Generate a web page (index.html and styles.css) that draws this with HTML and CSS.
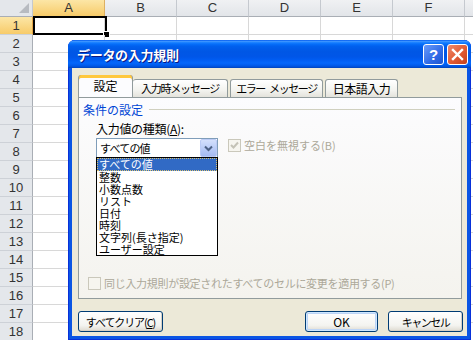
FILE: index.html
```html
<!DOCTYPE html>
<html lang="ja">
<head>
<meta charset="utf-8">
<title>データの入力規則</title>
<link rel="stylesheet" href="styles.css">
</head>
<body>
<div class="sheet">
  <div class="hdr">
    <div class="corner"><span class="tri"></span></div>
    <div class="col sel">A</div>
    <div class="col">B</div>
    <div class="col">C</div>
    <div class="col">D</div>
    <div class="col">E</div>
    <div class="col">F</div>
    <div class="col last"></div>
  </div>
  <div class="row"><div class="rh sel">1</div><div class="cells"><div class="active"><span class="handle"></span></div></div></div>
  <div class="row"><div class="rh">2</div><div class="cells"></div></div>
  <div class="row"><div class="rh">3</div><div class="cells"></div></div>
  <div class="row"><div class="rh">4</div><div class="cells"></div></div>
  <div class="row"><div class="rh">5</div><div class="cells"></div></div>
  <div class="row"><div class="rh">6</div><div class="cells"></div></div>
  <div class="row"><div class="rh">7</div><div class="cells"></div></div>
  <div class="row"><div class="rh">8</div><div class="cells"></div></div>
  <div class="row"><div class="rh">9</div><div class="cells"></div></div>
  <div class="row"><div class="rh">10</div><div class="cells"></div></div>
  <div class="row"><div class="rh">11</div><div class="cells"></div></div>
  <div class="row"><div class="rh">12</div><div class="cells"></div></div>
  <div class="row"><div class="rh">13</div><div class="cells"></div></div>
  <div class="row"><div class="rh">14</div><div class="cells"></div></div>
  <div class="row"><div class="rh">15</div><div class="cells"></div></div>
  <div class="row"><div class="rh">16</div><div class="cells"></div></div>
  <div class="row"><div class="rh">17</div><div class="cells"></div></div>
  <div class="row"><div class="rh">18</div><div class="cells"></div></div>
</div>

<div class="dialog">
  <div class="titlebar">
    <span class="title">データの入力規則</span>
    <span class="tbtn help">?</span>
    <span class="tbtn close"><svg width="13" height="13" viewBox="0 0 13 13"><path d="M2 2 L11 11 M11 2 L2 11" stroke="#fff" stroke-width="2.4" stroke-linecap="square"/></svg></span>
  </div>
  <div class="dbody">
    <div class="tabs">
      <div class="tab active">設定</div>
      <div class="tab t2">入力時メッセージ</div>
      <div class="tab t3">エラー メッセージ</div>
      <div class="tab t4">日本語入力</div>
    </div>
    <div class="panel">
      <div class="legend"><span>条件の設定</span></div>
      <div class="lbl">入力値の種類(<u>A</u>):</div>
      <div class="crow">
        <div class="combo">
          <span class="ctext">すべての値</span>
          <span class="cbtn"><svg width="9" height="7" viewBox="0 0 9 7"><path d="M1 1.5 L4.5 5 L8 1.5" fill="none" stroke="#4D6185" stroke-width="2"/></svg></span>
        </div>
        <div class="chk dis ignore"><span class="box"><svg width="11" height="11" viewBox="0 0 11 11"><path d="M2 5 L4.5 7.5 L9 2.5" fill="none" stroke="#C4C2B6" stroke-width="2"/></svg></span><span>空白を無視する(B)</span></div>
      </div>
      <div class="chk dis apply"><span class="box"></span><span>同じ入力規則が設定されたすべてのセルに変更を適用する(P)</span></div>
      <ul class="list">
        <li class="on">すべての値</li>
        <li>整数</li>
        <li>小数点数</li>
        <li>リスト</li>
        <li>日付</li>
        <li>時刻</li>
        <li>文字列(長さ指定)</li>
        <li>ユーザー設定</li>
      </ul>
    </div>
    <div class="footer">
      <button class="btn clear">すべてクリア(<u>C</u>)</button>
      <span class="spacer"></span>
      <button class="btn ok">OK</button>
      <button class="btn cancel">キャンセル</button>
    </div>
  </div>
</div>
</body>
</html>
```

FILE: styles.css
```css
* { box-sizing: border-box; margin: 0; padding: 0; }
body {
  margin: 0;
  width: 473px;
  height: 340px;
  overflow: hidden;
  background: #fff;
  position: relative;
  font-family: "Liberation Sans", Arial, sans-serif;
}

/* spreadsheet */
.sheet { display: flex; flex-direction: column; }
.hdr { display: flex; height: 17px; }
.corner {
  width: 33px; flex: none; position: relative;
  background: #E4E7EB;
  border-right: 1px solid #C5C9CF;
  border-bottom: 1px solid #A9AEB5;
}
.corner .tri {
  position: absolute; right: 3px; bottom: 3px;
  width: 0; height: 0;
  border-left: 10px solid transparent;
  border-bottom: 10px solid #B7BBC1;
}
.col {
  width: 72px; flex: none;
  background: linear-gradient(#F0F1F3, #E2E5E9);
  border-right: 1px solid #C5C9CF;
  border-bottom: 1px solid #A9AEB5;
  font-size: 13px; line-height: 16px; color: #333;
  text-align: center;
}
.col.sel {
  background: linear-gradient(#FCE6A6, #F7CB69);
  border-bottom-color: #E3A447;
  border-right-color: #DDB062;
}
.col.last { width: 8px; border-right: 0; }
.row { display: flex; height: 18px; }
.rh {
  width: 33px; flex: none;
  background: #E4E7EB;
  border-right: 1px solid #A9AEB5;
  border-bottom: 1px solid #CDD1D7;
  font-size: 13px; line-height: 17px; color: #333;
  text-align: center;
}
.rh.sel {
  background: linear-gradient(#FCE6A6, #F7CB69);
  border-right-color: #E3A447;
}
.cells {
  flex: 1; position: relative;
  border-bottom: 1px solid #D8D8D8;
  background: repeating-linear-gradient(to right, transparent 0 71px, #D8D8D8 71px 72px);
}
.active {
  position: absolute; left: 0; top: -1px;
  width: 74px; height: 19px;
  border: 2px solid #000;
}
.handle {
  position: absolute; right: -5px; bottom: -5px;
  width: 7px; height: 7px;
  background: #000; border: 1px solid #fff;
}

/* dialog */
.dialog {
  position: absolute; left: 68px; top: 40px;
  width: 403px; height: 300px;
  display: flex; flex-direction: column;
  background: #0A55E4;
  border-radius: 7px 7px 0 0;
  padding: 0 4px 4px;
  box-shadow: inset 1px 0 0 #0831D9, inset -1px 0 0 #0831D9, inset 0 -1px 0 #0831D9;
  font-family: "Noto Sans CJK JP", "Noto Sans CJK SC", sans-serif;
  font-size: 12px; color: #000;
}
.titlebar {
  height: 28px; flex: none;
  margin: 0 -4px;
  padding: 0 3px 0 9px;
  display: flex; align-items: center; gap: 2px;
  border-radius: 7px 7px 0 0;
  background: linear-gradient(#0058EE 0%, #3D95FF 5%, #1C82FF 9%, #0670FB 14%, #0060EE 22%, #0057E5 40%, #0056E8 60%, #005DF3 72%, #0467FB 82%, #005CEE 90%, #0050D8 96%, #0042B8 100%);
}
.title {
  flex: 1;
  color: #fff; font-weight: bold; font-size: 13px;
  line-height: 16px;
  letter-spacing: -0.3px;
  text-shadow: 1px 1px 0 #0A1883;
  padding-top: 1px;
}
.tbtn {
  width: 21px; height: 21px; flex: none;
  border: 1px solid #fff; border-radius: 3px;
  display: flex; align-items: center; justify-content: center;
  color: #fff;
}
.help {
  background: linear-gradient(135deg, #6A9BFA, #2F6AE6 60%, #1E55D0);
  font-family: "Liberation Sans", Arial, sans-serif;
  font-weight: bold; font-size: 15px; line-height: 15px;
  margin-right: 1px;
}
.close {
  background: linear-gradient(135deg, #F08A6C, #E05A34 55%, #C4401D);
}

.dbody {
  flex: 1;
  background: #ECE9D8;
  padding: 8px 5px 0 6px;
  display: flex; flex-direction: column;
}
.tabs { display: flex; align-items: flex-end; height: 21px; flex: none; }
.tab {
  flex: none;
  height: 18px;
  border: 1px solid #919B9C; border-bottom: 0;
  border-radius: 3px 3px 0 0;
  background: linear-gradient(#FFFFFF, #F3F3EF 60%, #E4E3DC);
  text-align: center; line-height: 17px;
  white-space: nowrap;
}
.tab.active {
  width: 55px; height: 22px;
  margin-bottom: -1px;
  position: relative; z-index: 1;
  background: #FCFCFE;
  border-top: 0;
  box-shadow: inset 0 3px 0 #FFC83C, inset 0 1px 0 #E68B2C;
  line-height: 22px;
}
.tab.t2 { width: 95px; border-left: 0; font-size: 11px; letter-spacing: -1.2px; }
.tab.t3 { width: 93px; margin-left: 2px; font-size: 11px; letter-spacing: -1.4px; word-spacing: 3px; }
.tab.t4 { width: 73px; margin-left: 2px; letter-spacing: -0.5px; }

.panel {
  height: 202px; flex: none;
  border: 1px solid #919B9C;
  background: linear-gradient(#FCFCFE, #F4F3EE);
  position: relative;
  display: flex; flex-direction: column;
}
.legend {
  margin-top: 5px; height: 13px; line-height: 13px;
  padding-left: 4px; padding-right: 6px;
  display: flex; align-items: center;
  color: #0046D5;
}
.legend::after {
  content: ""; flex: 1; height: 1px;
  background: #D0D0BF; margin-left: 6px;
}
.lbl { margin-top: 6px; margin-left: 17px; height: 13px; line-height: 13px; letter-spacing: -0.3px; }
.crow { margin-top: 3px; margin-left: 17px; display: flex; align-items: flex-start; }
.combo {
  width: 122px; height: 20px; flex: none;
  border: 1px solid #7F9DB9; background: #fff;
  display: flex; align-items: center;
}
.ctext { flex: 1; padding-left: 3px; line-height: 16px; font-size: 11px; letter-spacing: -0.8px; }
.cbtn {
  width: 17px; height: 18px; flex: none;
  border: 1px solid #BBCBF5; border-radius: 2px;
  background: linear-gradient(#D4E0FC, #B6C9F6 60%, #A5BAF0);
  display: flex; align-items: center; justify-content: center;
}
.chk { display: flex; align-items: center; gap: 2px; line-height: 13px; white-space: nowrap; font-size: 11px; }
.chk.dis { color: #ACA899; }
.ignore { margin-left: 10px; margin-top: 1px; }
.box {
  width: 13px; height: 13px; flex: none;
  border: 1px solid #CAC8BB; background: #F6F5EF;
  display: flex; align-items: center; justify-content: center;
  margin-right: 1px;
}
.apply { margin-top: auto; margin-bottom: 8px; margin-left: 9px; letter-spacing: -0.3px; }

.list {
  list-style: none;
  position: absolute; left: 17px; top: 59px;
  width: 122px; height: 99px;
  border: 1px solid #000; background: #fff;
  font-size: 11px;
}
.list li { height: 12px; line-height: 12px; padding-left: 2px; white-space: nowrap; }
.list li.on {
  background: #316AC5; color: #fff;
  outline: 1px dotted #D8C070; outline-offset: -1px;
  height: 13px; line-height: 13px;
}

.footer { display: flex; margin-top: 12px; height: 21px; flex: none; }
.spacer { flex: 1; }
.btn {
  height: 21px; flex: none;
  font: inherit; color: #000;
  border: 1px solid #003C74; border-radius: 3px;
  background: linear-gradient(#FFFFFF, #F4F4F0 70%, #DEDAD0);
  box-shadow: inset -1px -1px 0 #D6D0C5;
  line-height: 18px;
}
.clear { width: 85px; font-size: 11px; letter-spacing: -1.1px; }
.ok { width: 73px; box-shadow: inset 0 0 0 1px #CEE7FF, inset 0 0 0 2px #BCD4F6; }
.cancel { width: 75px; margin-left: 10px; margin-right: -1px; font-size: 11px; letter-spacing: -1.5px; }
```
